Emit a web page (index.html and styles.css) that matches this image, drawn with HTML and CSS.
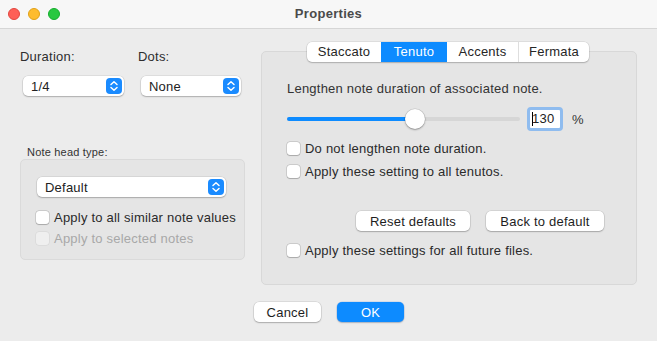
FILE: index.html
```html
<!DOCTYPE html>
<html>
<head>
<meta charset="utf-8">
<link rel="stylesheet" href="styles.css">
</head>
<body>
<div class="window">
  <div class="titlebar">
    <div class="lights">
      <span class="light red"></span>
      <span class="light yellow"></span>
      <span class="light green"></span>
    </div>
    <div class="title">Properties</div>
  </div>
  <div class="main">
    <div class="left">
      <div class="fields">
        <div class="field dur">
          <div class="label">Duration:</div>
          <div class="popup w101"><span>1/4</span><span class="arrow"><svg width="16" height="16" viewBox="0 0 16 16"><path d="M5 6.5 L8 3.8 L11 6.5 M5 9.5 L8 12.2 L11 9.5" fill="none" stroke="#fff" stroke-width="1.5" stroke-linecap="round" stroke-linejoin="round"/></svg></span></div>
        </div>
        <div class="field dots">
          <div class="label">Dots:</div>
          <div class="popup w100"><span>None</span><span class="arrow"><svg width="16" height="16" viewBox="0 0 16 16"><path d="M5 6.5 L8 3.8 L11 6.5 M5 9.5 L8 12.2 L11 9.5" fill="none" stroke="#fff" stroke-width="1.5" stroke-linecap="round" stroke-linejoin="round"/></svg></span></div>
        </div>
      </div>
      <div class="grouplabel">Note head type:</div>
      <div class="groupbox">
        <div class="popup w189"><span>Default</span><span class="arrow"><svg width="16" height="16" viewBox="0 0 16 16"><path d="M5 6.5 L8 3.8 L11 6.5 M5 9.5 L8 12.2 L11 9.5" fill="none" stroke="#fff" stroke-width="1.5" stroke-linecap="round" stroke-linejoin="round"/></svg></span></div>
        <div class="check first"><span class="box"></span><span>Apply to all similar note values</span></div>
        <div class="check disabled"><span class="box"></span><span>Apply to selected notes</span></div>
      </div>
    </div>
    <div class="right">
      <div class="tabs">
        <span class="tab t1">Staccato</span><span class="tab sel t2">Tenuto</span><span class="tab t3">Accents</span><span class="tab t4">Fermata</span>
      </div>
      <div class="tabbox">
        <div class="desc">Lengthen note duration of associated note.</div>
        <div class="sliderrow">
          <div class="slider">
            <div class="fill" style="width:128px"></div>
            <div class="knob"></div>
          </div>
          <div class="textfield"><span class="caret"></span>130</div>
          <span class="pct">%</span>
        </div>
        <div class="check r1"><span class="box"></span><span>Do not lengthen note duration.</span></div>
        <div class="check r2"><span class="box"></span><span>Apply these setting to all tenutos.</span></div>
        <div class="btnrow">
          <span class="btn reset">Reset defaults</span>
          <span class="btn back">Back to default</span>
        </div>
        <div class="check r3"><span class="box"></span><span>Apply these settings for all future files.</span></div>
      </div>
    </div>
  </div>
  <div class="footer">
    <span class="btn cancel">Cancel</span>
    <span class="btn ok">OK</span>
  </div>
</div>
</body>
</html>
```
FILE: styles.css
```css
* { box-sizing: border-box; }
html, body { margin: 0; padding: 0; }
body {
  width: 657px;
  height: 341px;
  overflow: hidden;
  font-family: "Liberation Sans", Arial, sans-serif;
  font-size: 13px;
  letter-spacing: 0.22px;
  color: #262626;
}
.window {
  width: 657px;
  height: 341px;
  background: #ececec;
}
.titlebar {
  height: 29px;
  background: #f7f7f7;
  border-bottom: 1px solid #d6d6d6;
  display: flex;
  align-items: center;
  position: relative;
}
.lights {
  display: flex;
  gap: 8px;
  padding-left: 8px;
  margin-top: -1px;
}
.light {
  width: 12px;
  height: 12px;
  border-radius: 50%;
  display: block;
}
.red { background: #fe5f57; border: 0.5px solid #e2463f; }
.yellow { background: #febc2e; border: 0.5px solid #e1a116; }
.green { background: #28c840; border: 0.5px solid #14ae2c; }
.title {
  flex: 1;
  text-align: center;
  font-weight: bold;
  color: #4a4a4a;
  margin-left: -60px;
  margin-top: -1px;
  letter-spacing: 0.3px;
}
.main {
  display: flex;
  padding: 0 20px 0 20px;
}
.left { width: 225px; }
.fields { display: flex; padding-top: 20px; }
.field.dur { width: 118px; }
.label { line-height: 16px; height: 16px; color: #2e2e2e; }
.popup {
  margin-top: 11px;
  height: 20px;
  background: #fff;
  border-radius: 5px;
  box-shadow: 0 0 0 0.5px rgba(0,0,0,0.12), 0 1px 1.5px rgba(0,0,0,0.22);
  display: flex;
  align-items: center;
  justify-content: space-between;
  padding: 0 2px 0 8px;
  margin-left: 3px;
  color: #222;
}
.w101 { width: 101px; }
.w100 { width: 100px; }
.w189 { width: 189px; margin: 0; }
.arrow {
  width: 16px;
  height: 16px;
  border-radius: 4px;
  background: #1a8bff;
  display: flex;
}
.grouplabel {
  margin-top: 50px;
  padding-left: 7px;
  font-size: 11px;
  line-height: 13px;
  height: 13px;
  color: #333;
  letter-spacing: 0.2px;
}
.groupbox {
  height: 101px;
  background: #e5e5e5;
  border: 1px solid #dadada;
  border-radius: 5px;
  padding: 17px 0 0 16px;
}
.check {
  display: flex;
  align-items: center;
  height: 21px;
  gap: 5px;
  color: #2a2a2a;
}
.check .box {
  width: 13px;
  height: 13px;
  background: #fff;
  border-radius: 3px;
  box-shadow: 0 0 0 0.5px rgba(0,0,0,0.2), 0 0.5px 1px rgba(0,0,0,0.18);
}
.check.first { margin-top: 10px; margin-left: -1px; }
.check.disabled { margin-left: -1px; color: #a8a8a8; }
.check.disabled .box { background: #efefef; box-shadow: 0 0 0 0.5px rgba(0,0,0,0.08); }
.right {
  margin-left: 16px;
  width: 376px;
  display: flex;
  flex-direction: column;
  align-items: center;
  padding-top: 13px;
}
.tabs {
  display: flex;
  height: 20px;
  background: #fff;
  border-radius: 5px;
  box-shadow: 0 0 0 0.5px rgba(0,0,0,0.12), 0 1px 1.5px rgba(0,0,0,0.2);
  margin-bottom: -11px;
  position: relative;
  z-index: 1;
  overflow: hidden;
  margin-left: -2px;
}
.tab {
  display: flex;
  align-items: center;
  justify-content: center;
  line-height: 20px;
  color: #262626;
  border-left: 1px solid #dedede;
}
.t1 { width: 74px; border-left: none; }
.t2 { width: 65px; }
.t3 { width: 72px; }
.t4 { width: 71px; }
.tab.sel { background: #0d8bff; color: #fff; border-left-color: #0d8bff; }
.t3 { border-left-color: #0d8bff; }
.tabbox {
  width: 376px;
  height: 234px;
  background: #e5e5e5;
  border: 1px solid #d8d8d8;
  border-radius: 5px;
  padding: 29px 0 0 25px;
}
.desc { line-height: 16px; color: #333; }
.sliderrow {
  display: flex;
  align-items: center;
  margin-top: 10px;
  height: 24px;
}
.slider {
  width: 233px;
  height: 4px;
  border-radius: 2px;
  background: #d6d6d6;
  position: relative;
}
.fill {
  height: 4px;
  border-radius: 2px;
  background: #0d8bff;
}
.knob {
  position: absolute;
  left: 118px;
  top: -8px;
  width: 20px;
  height: 20px;
  border-radius: 50%;
  background: #fff;
  box-shadow: 0 0 0 0.5px rgba(0,0,0,0.15), 0 1px 2px rgba(0,0,0,0.3);
}
.textfield {
  margin-left: 7px;
  width: 36px;
  height: 24px;
  border: 3px solid #8fbcef;
  border-radius: 4px;
  background: #fff;
  padding-left: 2px;
  line-height: 18px;
  display: flex;
  align-items: center;
  color: #222;
}
.caret {
  width: 1px;
  height: 14px;
  background: #000;
  margin-right: -1px;
}
.pct { margin-left: 9px; color: #333; }
.check.r1 { margin-top: 7px; }
.check.r2 { margin-top: 2px; }
.btnrow {
  display: flex;
  gap: 16px;
  margin-top: 29px;
  padding-left: 69px;
}
.btn {
  height: 20px;
  background: #fff;
  border-radius: 5px;
  box-shadow: 0 0 0 0.5px rgba(0,0,0,0.14), 0 1px 1.5px rgba(0,0,0,0.22);
  display: flex;
  align-items: center;
  justify-content: center;
  color: #1e1e1e;
}
.reset { width: 114px; }
.back { width: 118px; }
.check.r3 { margin-top: 9px; }
.footer {
  display: flex;
  justify-content: center;
  gap: 16px;
  margin-top: 17px;
  padding-left: 1px;
}
.cancel { width: 67px; }
.ok { width: 67px; background: #0d8bff; color: #fff; box-shadow: 0 0 0 0.5px rgba(0,80,200,0.2), 0 1px 1.5px rgba(0,0,0,0.2); }
```
